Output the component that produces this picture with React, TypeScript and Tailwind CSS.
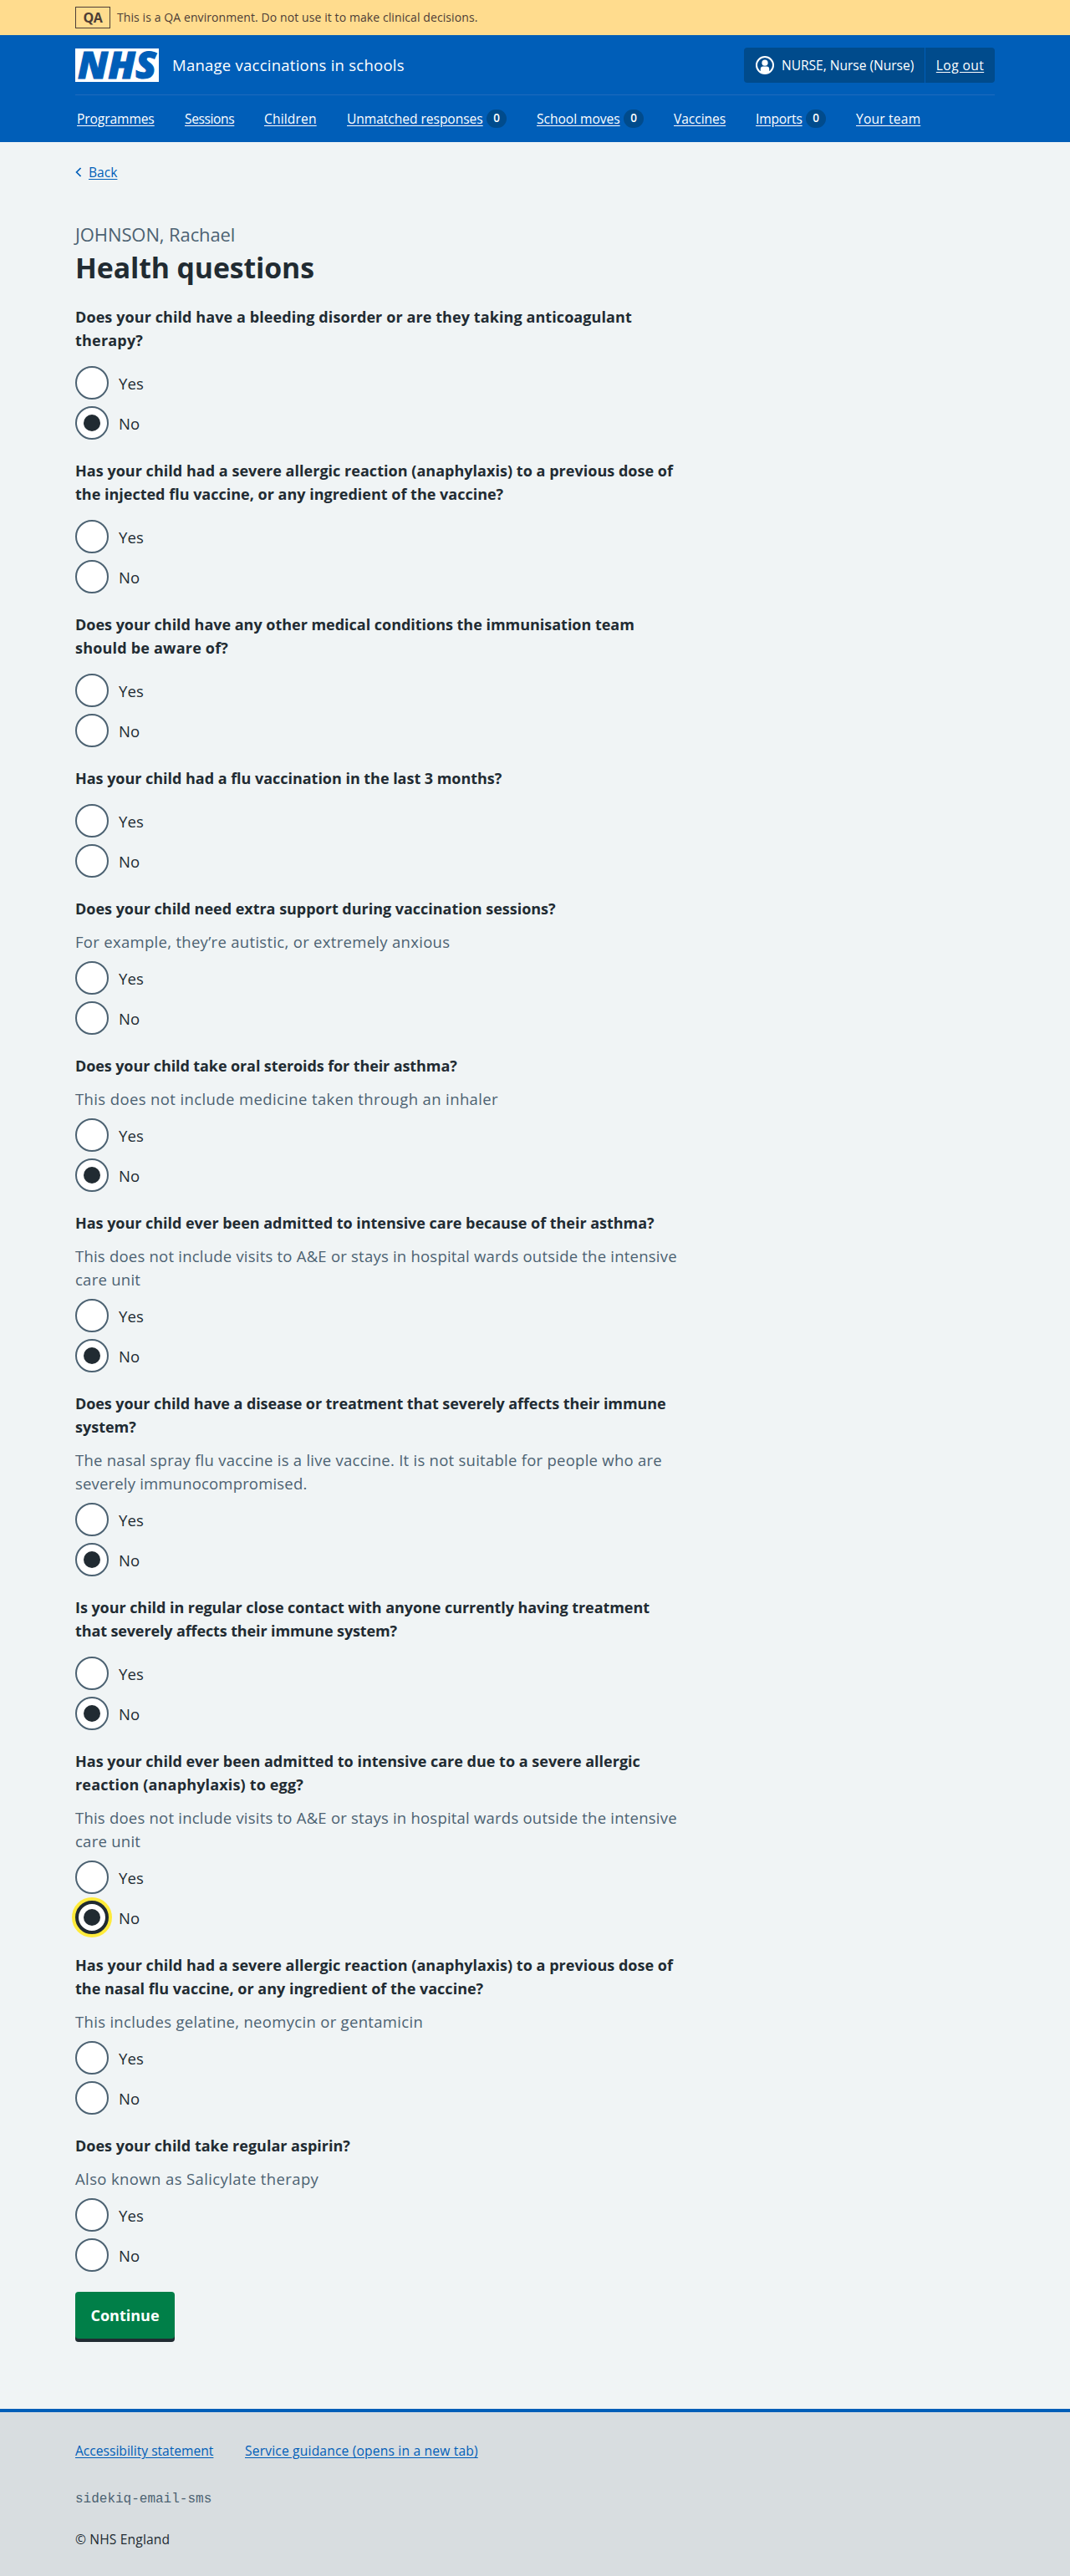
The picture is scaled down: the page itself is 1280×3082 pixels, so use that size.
type Line = { text: string; track?: string };
type Question = { lines: Line[]; hint?: Line[]; answer?: "Yes" | "No"; focused?: boolean };

const CARE_UNIT_HINT: Line[] = [
  { text: "This does not include visits to A&E or stays in hospital wards outside the intensive", track: "tracking-[0.22px]" },
  { text: "care unit" },
];

const QUESTIONS: Question[] = [
  {
    lines: [
      { text: "Does your child have a bleeding disorder or are they taking anticoagulant", track: "tracking-[0.09px]" },
      { text: "therapy?", track: "tracking-[0.2px]" },
    ],
    answer: "No",
  },
  {
    lines: [
      { text: "Has your child had a severe allergic reaction (anaphylaxis) to a previous dose of", track: "tracking-[0.03px]" },
      { text: "the injected flu vaccine, or any ingredient of the vaccine?", track: "tracking-[0px]" },
    ],
  },
  {
    lines: [
      { text: "Does your child have any other medical conditions the immunisation team", track: "tracking-[-0.02px]" },
      { text: "should be aware of?", track: "tracking-[0.2px]" },
    ],
  },
  { lines: [{ text: "Has your child had a flu vaccination in the last 3 months?", track: "tracking-[-0.03px]" }] },
  {
    lines: [{ text: "Does your child need extra support during vaccination sessions?", track: "tracking-[-0.02px]" }],
    hint: [{ text: "For example, they’re autistic, or extremely anxious", track: "tracking-[0.3px]" }],
  },
  {
    lines: [{ text: "Does your child take oral steroids for their asthma?", track: "tracking-[-0.1px]" }],
    hint: [{ text: "This does not include medicine taken through an inhaler", track: "tracking-[0.38px]" }],
    answer: "No",
  },
  {
    lines: [{ text: "Has your child ever been admitted to intensive care because of their asthma?", track: "tracking-[-0.03px]" }],
    hint: CARE_UNIT_HINT,
    answer: "No",
  },
  {
    lines: [
      { text: "Does your child have a disease or treatment that severely affects their immune", track: "tracking-[-0.08px]" },
      { text: "system?" },
    ],
    hint: [
      { text: "The nasal spray flu vaccine is a live vaccine. It is not suitable for people who are" },
      { text: "severely immunocompromised.", track: "tracking-[0.18px]" },
    ],
    answer: "No",
  },
  {
    lines: [
      { text: "Is your child in regular close contact with anyone currently having treatment", track: "tracking-[-0.06px]" },
      { text: "that severely affects their immune system?", track: "tracking-[-0.12px]" },
    ],
    answer: "No",
  },
  {
    lines: [
      { text: "Has your child ever been admitted to intensive care due to a severe allergic", track: "tracking-[0px]" },
      { text: "reaction (anaphylaxis) to egg?", track: "tracking-[0.16px]" },
    ],
    hint: CARE_UNIT_HINT,
    answer: "No",
    focused: true,
  },
  {
    lines: [
      { text: "Has your child had a severe allergic reaction (anaphylaxis) to a previous dose of", track: "tracking-[0.03px]" },
      { text: "the nasal flu vaccine, or any ingredient of the vaccine?", track: "tracking-[0.01px]" },
    ],
    hint: [{ text: "This includes gelatine, neomycin or gentamicin", track: "tracking-[0.31px]" }],
  },
  {
    lines: [{ text: "Does your child take regular aspirin?" }],
    hint: [{ text: "Also known as Salicylate therapy", track: "tracking-[0.38px]" }],
  },
];

const NAV = [
  { label: "Programmes", size: "w-[93px] tracking-[-0.1px]" },
  { label: "Sessions", size: "w-[59px] tracking-[-0.4px]" },
  { label: "Children", size: "w-[63px] tracking-[0.15px]" },
  { label: "Unmatched responses", size: "w-[163px] tracking-[-0.05px]", count: 0 },
  { label: "School moves", size: "w-[100px] tracking-[-0.04px]", count: 0 },
  { label: "Vaccines", size: "w-[62px] tracking-[-0.05px]" },
  { label: "Imports", size: "w-[56px] tracking-[-0.2px]", count: 0 },
  { label: "Your team", size: "w-[77px] tracking-[0.2px]" },
];

function Radio({ label, checked, focused }: { label: string; checked: boolean; focused: boolean }) {
  return (
    <label className="flex h-10 items-center gap-3">
      <span
        className={
          focused
            ? "flex size-10 items-center justify-center rounded-full border-4 border-[#212b32] bg-white ring-4 ring-[#ffeb3b]"
            : "flex size-10 items-center justify-center rounded-full border-2 border-[#4c6272] bg-white"
        }
      >
        {checked && <span className="size-5 rounded-full bg-[#212b32]" />}
      </span>
      <span className="pt-px text-[18.5px] leading-7 tracking-[0.1px]">{label}</span>
    </label>
  );
}

function Lines({ lines, track }: { lines: Line[]; track: string }) {
  return (
    <>
      {lines.map((line) => (
        <span key={line.text} className={`block whitespace-nowrap ${line.track ?? track}`}>
          {line.text}
        </span>
      ))}
    </>
  );
}

function QuestionGroup({ question }: { question: Question }) {
  return (
    <div role="group" className="w-[726px]">
      <div className="text-[18px] leading-7 font-bold">
        <Lines lines={question.lines} track="tracking-normal" />
      </div>
      {question.hint && (
        <div className="mt-3 text-[18.5px] leading-7 text-[#4c6272]">
          <Lines lines={question.hint} track="tracking-[0.26px]" />
        </div>
      )}
      <div className={question.hint ? "mt-[9px] flex flex-col gap-2" : "mt-[17px] flex flex-col gap-2"}>
        {["Yes", "No"].map((option) => (
          <Radio
            key={option}
            label={option}
            checked={question.answer === option}
            focused={question.answer === option && !!question.focused}
          />
        ))}
      </div>
    </div>
  );
}

function Logo() {
  return (
    <svg viewBox="0 0 100 40" className="h-10 w-[100px] overflow-visible bg-white" role="img" aria-label="NHS">
      <text
        x="3"
        y="36"
        fontFamily="Open Sans"
        fontStyle="italic"
        fontWeight="800"
        fontSize="44"
        textLength="94"
        lengthAdjust="spacingAndGlyphs"
        fill="#005eb8"
        stroke="#005eb8"
        strokeWidth="1"
      >
        NHS
      </text>
    </svg>
  );
}

function UserIcon() {
  return (
    <svg viewBox="0 0 22 22" className="size-[22px]" fill="none">
      <circle cx="11" cy="11" r="10" stroke="#fff" strokeWidth="2" />
      <circle cx="11" cy="8.2" r="3.6" fill="#fff" />
      <path d="M5.8 19V15.5a3 3 0 0 1 3-3h4.4a3 3 0 0 1 3 3V19a10 10 0 0 1-10.4 0z" fill="#fff" />
    </svg>
  );
}

export default function App() {
  return (
    <div className="flex h-[3082px] flex-col bg-[#f0f4f5] font-['Open_Sans',sans-serif] text-[#212b32]">
      <div className="h-[42px] bg-[#ffdc8e] text-[#4d3d36]">
        <div className="mx-auto flex h-full w-[1100px] items-center">
          <strong className="flex h-[26px] w-[42px] items-center justify-center border border-current text-[16px] leading-6 font-bold tracking-[-0.4px]">
            QA
          </strong>
          <span className="ml-2 text-[14px] leading-6 tracking-[0.09px]">
            This is a QA environment. Do not use it to make clinical decisions.
          </span>
        </div>
      </div>

      <header className="h-32 bg-[#005eb8] text-white">
        <div className="mx-auto w-[1100px]">
          <div className="flex h-[72px] items-center border-b border-[#1f6bbd]">
            <Logo />
            <span className="ml-4 text-[18.5px] leading-7 tracking-[0.25px]">Manage vaccinations in schools</span>
            <div className="ml-auto flex h-[42px] w-[300px] rounded bg-[#004b8c]">
              <div className="flex w-[217px] items-center border-r border-[#005eb8] pl-[14px]">
                <UserIcon />
                <span className="ml-[9px] text-[15.6px] leading-6 tracking-[-0.04px]">NURSE, Nurse (Nurse)</span>
              </div>
              <div className="flex flex-1 items-center justify-center text-[15.6px] leading-6 tracking-[0.4px]">
                <a className="underline underline-offset-2">Log out</a>
              </div>
            </div>
          </div>
          <nav className="flex h-[55px] items-center gap-9 pl-[2px]">
            {NAV.map((item) => (
              <div key={item.label} className="flex items-center">
                <a className={`text-[15.6px] leading-6 whitespace-nowrap underline underline-offset-2 ${item.size}`}>
                  {item.label}
                </a>
                {item.count !== undefined && (
                  <span className="ml-1 flex h-[22px] w-6 items-center justify-center rounded-full bg-[#004b8c] text-[13.5px] font-semibold">
                    {item.count}
                  </span>
                )}
              </div>
            ))}
          </nav>
        </div>
      </header>

      <main className="mx-auto w-[1100px] flex-1">
        <a className="mt-6 flex h-6 items-center text-[15.6px] leading-6 text-[#005eb8]">
          <svg viewBox="0 0 8 12" className="mr-2 h-3 w-2" fill="none" stroke="#005eb8" strokeWidth="1.7">
            <path d="M6.6 1 1.6 6l5 5" />
          </svg>
          <span className="underline underline-offset-2">Back</span>
        </a>
        <h1 className="mt-[46px]">
          <span className="block text-[22px] leading-8 tracking-[-0.1px] text-[#4c6272]">JOHNSON, Rachael</span>
          <span className="block pt-[2px] text-[33.8px] leading-[45px] font-bold tracking-[-0.1px]">Health questions</span>
        </h1>
        <div className="mt-[22px] flex flex-col gap-[23px]">
          {QUESTIONS.map((question, index) => (
            <QuestionGroup key={index} question={question} />
          ))}
        </div>
        <button className="mt-6 block h-14 w-[119px] rounded bg-[#007f48] text-[18px] leading-7 font-bold text-white shadow-[0_4px_0_#212b32]">
          Continue
        </button>
      </main>

      <footer className="h-[200px] border-t-4 border-[#005eb8] bg-[#d8dde0]">
        <div className="mx-auto flex w-[1100px] flex-col pt-[34px] text-[15.6px] leading-6">
          <div className="flex gap-[37px] text-[#005eb8]">
            <a className="w-[166px] whitespace-nowrap underline underline-offset-2">Accessibility statement</a>
            <a className="tracking-[0.18px] underline underline-offset-2">Service guidance (opens in a new tab)</a>
          </div>
          <code className="mt-[34px] font-['Liberation_Mono',monospace] text-[16px] text-[#4c6272]">
            sidekiq-email-sms
          </code>
          <span className="mt-6 tracking-[0.15px]">© NHS England</span>
        </div>
      </footer>
    </div>
  );
}
